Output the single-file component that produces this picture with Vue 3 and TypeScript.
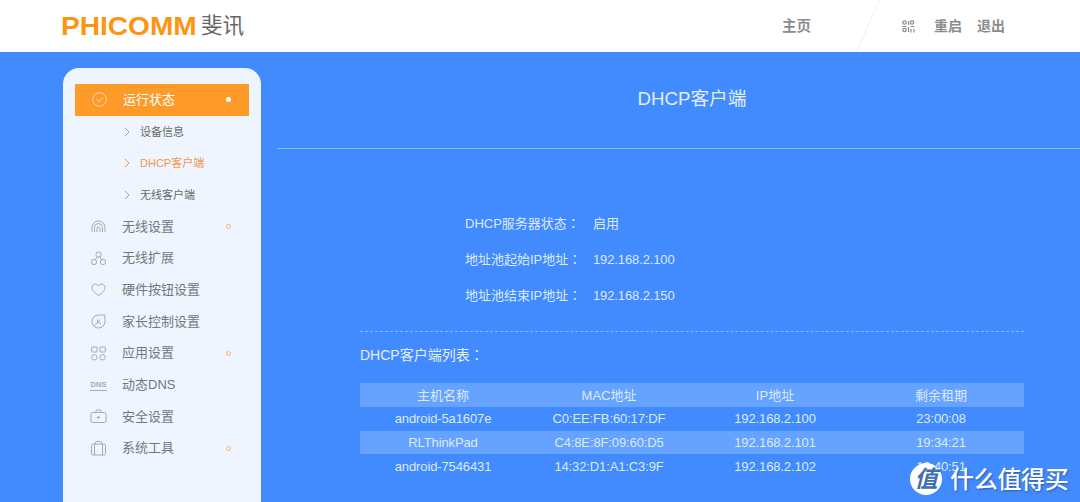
<script setup lang="ts">
interface MenuItem {
  label: string;
  icon?: string[];
  dns?: boolean;
  dot?: boolean;
}

const circle = (cx: number, cy: number, r: number) =>
  `M${cx - r} ${cy}a${r} ${r} 0 1 0 ${r * 2} 0a${r} ${r} 0 1 0 ${-r * 2} 0`;

const subItems = [
  { label: "设备信息", active: false },
  { label: "DHCP客户端", active: true },
  { label: "无线客户端", active: false },
];

const menu: MenuItem[] = [
  {
    label: "无线设置",
    dot: true,
    icon: [
      "M2 14V9.500a6.500 6.500 0 0 1 13 0V14",
      "M4.500 14V9.500a4 4 0 0 1 8 0V14",
      "M7 14v-3.500a1.500 1.500 0 0 1 3 0V14",
    ],
  },
  {
    label: "无线扩展",
    icon: [circle(8.5, 4.5, 2.6), circle(4, 12, 2.6), circle(13, 12, 2.6), "M7 7l-1.500 2.600M10 7l1.500 2.600"],
  },
  {
    label: "硬件按钮设置",
    icon: ["M8.500 14.500C5 12 2 9.600 2 6.400 2 4.200 3.700 3 5.200 3c1.400 0 2.500.7 3.300 2 .8-1.300 1.900-2 3.300-2C13.300 3 15 4.200 15 6.400c0 3.200-3 5.600-6.500 8.100z"],
  },
  {
    label: "家长控制设置",
    icon: [
      "M15 2C13 2.200 11.500 2 8.500 2A6.500 6.500 0 1 0 15 8.500C15 6 14.800 4 15 2z",
      "M4.500 12.500L10.500 6.500",
      "M7.500 6.500v3.500H11",
    ],
  },
  {
    label: "应用设置",
    dot: true,
    icon: [
      "M2.500 2h3.700a.8.8 0 0 1 .8.8v3.400a.8.8 0 0 1-.8.8H2.500a.8.8 0 0 1-.8-.8V2.800a.8.8 0 0 1 .8-.8z",
      "M10.800 2h3.700a.8.8 0 0 1 .8.8v3.400a.8.8 0 0 1-.8.8h-3.700a.8.8 0 0 1-.8-.8V2.800a.8.8 0 0 1 .8-.8z",
      circle(4.4, 12.300, 2.700),
      circle(12.600, 12.300, 2.700),
    ],
  },
  { label: "动态DNS", dns: true },
  {
    label: "安全设置",
    icon: [
      "M2.500 4.500h12a1.500 1.500 0 0 1 1.500 1.500v7a1.500 1.500 0 0 1-1.500 1.500h-12A1.500 1.500 0 0 1 1 13V6a1.500 1.500 0 0 1 1.500-1.500z",
      "M6 4.500V3a1 1 0 0 1 1-1h3a1 1 0 0 1 1 1v1.500",
      "M8.500 8v3M7 9.500h3",
    ],
  },
  {
    label: "系统工具",
    dot: true,
    icon: [
      "M3 4h11a1.500 1.500 0 0 1 1.500 1.500v8a1.500 1.500 0 0 1-1.500 1.500H3a1.500 1.500 0 0 1-1.500-1.500v-8A1.500 1.500 0 0 1 3 4z",
      "M5.500 4V2.500a1 1 0 0 1 1-1h4a1 1 0 0 1 1 1V4",
      "M4.500 4v11M12.500 4v11",
    ],
  },
];

const status = [
  { label: "DHCP服务器状态", value: "启用" },
  { label: "地址池起始IP地址", value: "192.168.2.100" },
  { label: "地址池结束IP地址", value: "192.168.2.150" },
];

const clients = [
  { name: "android-5a1607e", mac: "C0:EE:FB:60:17:DF", ip: "192.168.2.100", lease: "23:00:08" },
  { name: "RLThinkPad", mac: "C4:8E:8F:09:60:D5", ip: "192.168.2.101", lease: "19:34:21" },
  { name: "android-7546431", mac: "14:32:D1:A1:C3:9F", ip: "192.168.2.102", lease: "19:40:51" },
];
</script>

<template>
  <div class="page">
    <header class="top">
      <div class="logo">
        <span class="brand">PHICOMM</span>
        <span class="brand-cn">斐讯</span>
      </div>
      <nav class="nav">
        <span class="home">主页</span>
        <svg class="slash" width="24" height="52" viewBox="0 0 24 52">
          <path d="M23.500 0L0.500 52" stroke="#f0f0f0" fill="none" />
        </svg>
        <svg class="qr" width="13" height="13" viewBox="0 0 13 13" fill="none" stroke="#8c8c8c" stroke-width="1.200">
          <path :d="circle(2.500, 2.500, 1.700)" />
          <path :d="circle(10, 2.500, 1.700)" />
          <path :d="circle(2.500, 10, 1.700)" />
          <path d="M0.500 6.500h4M6.500 1v4M6.500 7v5M8.500 6.500h4M9 9v3.500M12 9v3.500" />
        </svg>
        <span class="action">重启</span>
        <span class="action">退出</span>
      </nav>
    </header>

    <div class="body">
      <aside class="side">
        <div class="active-item">
          <svg class="item-icon" width="17" height="17" viewBox="0 0 17 17" fill="none" stroke="#fbdcb0" stroke-width="1">
            <path :d="circle(8.500, 8.500, 6.800)" />
            <path d="M5.500 8.500l2.300 2.300 3.900-4" />
          </svg>
          <span class="item-label">运行状态</span>
          <i class="active-dot"></i>
        </div>
        <div v-for="sub in subItems" :key="sub.label" class="sub-item" :class="{ on: sub.active }">
          <svg width="6" height="10" viewBox="0 0 6 10" fill="none" stroke="currentColor" stroke-width="1">
            <path d="M1 1l4 4-4 4" />
          </svg>
          <span class="sub-label">{{ sub.label }}</span>
        </div>
        <div v-for="item in menu" :key="item.label" class="menu-item">
          <span v-if="item.dns" class="dns item-icon">DNS</span>
          <svg v-else class="item-icon" width="17" height="17" viewBox="0 0 17 17" fill="none" stroke="#a6a9b0" stroke-width="1">
            <path v-for="d in item.icon" :key="d" :d="d" />
          </svg>
          <span class="item-label">{{ item.label }}</span>
          <i v-if="item.dot" class="ring"></i>
        </div>
      </aside>

      <main class="main">
        <h1 class="title">DHCP客户端</h1>
        <div class="content">
          <div class="status">
            <div v-for="row in status" :key="row.label" class="status-row">
              <span class="status-label">{{ row.label }}<span class="colon">：</span></span>
              <span class="status-value">{{ row.value }}</span>
            </div>
          </div>
          <div class="list-title">DHCP客户端列表<span class="colon">：</span></div>
          <table class="clients">
            <thead>
              <tr>
                <th>主机名称</th>
                <th>MAC地址</th>
                <th>IP地址</th>
                <th>剩余租期</th>
              </tr>
            </thead>
            <tbody>
              <tr v-for="c in clients" :key="c.mac">
                <td>{{ c.name }}</td>
                <td>{{ c.mac }}</td>
                <td>{{ c.ip }}</td>
                <td>{{ c.lease }}</td>
              </tr>
            </tbody>
          </table>
        </div>
      </main>

      <div class="watermark">
        <span class="wm-badge">值</span>
        <span class="wm-text">什么值得买</span>
      </div>
    </div>
  </div>
</template>

<style>
html,
body {
  margin: 0;
  overflow: hidden;
}
</style>

<style scoped>
.page {
  width: 1080px;
  height: 502px;
  overflow: hidden;
  font-family: "Liberation Sans", "Noto Sans CJK SC", sans-serif;
}

.top {
  height: 52px;
  background: #fff;
  display: flex;
  align-items: center;
  justify-content: space-between;
}

.logo {
  margin-left: 61px;
  display: flex;
  align-items: center;
}

.brand {
  font-size: 26.500px;
  font-weight: 700;
  color: #fb9513;
  line-height: 30px;
  transform: scaleX(1.060);
  transform-origin: left center;
}

.brand-cn {
  margin-left: 12px;
  font-size: 21.500px;
  color: #666;
  line-height: 30px;
}

.nav {
  display: flex;
  align-items: center;
  height: 52px;
  margin-right: 75px;
  font-size: 14px;
  font-weight: 700;
  color: #8c8c8c;
}

.home,
.action {
  padding-bottom: 3px;
}

.home {
  font-size: 14.500px;
}

.slash {
  margin-left: 45px;
  flex: none;
}

.qr {
  margin-left: 22px;
}

.action {
  margin-left: 15px;
}

.qr + .action {
  margin-left: 19px;
}

.body {
  position: relative;
  height: 450px;
  background: #428bff;
  display: flex;
  overflow: hidden;
}

.side {
  width: 174px;
  height: 480px;
  margin: 16px 0 0 63px;
  padding: 16px 12px 0;
  background: #eef5ff;
  border-radius: 16px 16px 0 0;
  flex: none;
}

.active-item,
.sub-item,
.menu-item {
  height: 31.700px;
  display: flex;
  align-items: center;
}

.active-item {
  background: #fe9a28;
  color: #fff;
  font-size: 13px;
  padding-left: 16px;
  padding-right: 18px;
}

.item-icon {
  width: 17px;
  flex: none;
}

.item-label {
  margin-left: 15px;
  padding-bottom: 2px;
  flex: 1;
}

.menu-item .item-label {
  padding-bottom: 3px;
}

.active-dot {
  width: 5px;
  height: 5px;
  border-radius: 50%;
  background: #fff;
}

.sub-item {
  padding-left: 49px;
  font-size: 11px;
  color: #6a6a6a;
}

.sub-item svg {
  color: #a0a4ab;
  margin-right: 10px;
}

.sub-label {
  padding-bottom: 2px;
}

.sub-item.on,
.sub-item.on svg {
  color: #f0974a;
}

.menu-item {
  padding-left: 15px;
  padding-right: 18px;
  font-size: 13px;
  color: #777;
}

.dns {
  font-size: 7.500px;
  font-weight: 700;
  line-height: 9px;
  color: #a6a9b0;
  text-align: center;
  border-bottom: 1px solid #a6a9b0;
  padding-bottom: 1px;
}

.ring {
  width: 3px;
  height: 3px;
  border: 1px solid #f3b878;
  border-radius: 50%;
  background: #fdf0e0;
}

.main {
  margin-left: 16px;
  flex: 1;
  min-width: 0;
  color: #dbe9ff;
}

.title {
  margin: 0;
  height: 96px;
  width: 830px;
  line-height: 94px;
  text-align: center;
  font-size: 18.700px;
  font-weight: 400;
  color: #e3eeff;
  border-bottom: 1px solid #8db8ff;
}

.content {
  margin: 0 56px 0 83px;
}

.status {
  padding: 56px 0 19px 105px;
  border-bottom: 1px dashed #8db8ff;
}

.status-row {
  height: 35.700px;
  display: flex;
  align-items: center;
  font-size: 13px;
}

.status-label {
  width: 128px;
}

.status-value {
  letter-spacing: -0.120px;
}

.status-row + .status-row .status-value {
  padding-top: 2px;
}

.colon {
  font-family: "Noto Sans CJK TC", sans-serif;
}

.list-title {
  margin-top: 13px;
  height: 38px;
  font-size: 14px;
  line-height: 18px;
  color: #e3eeff;
}

.clients {
  width: 664px;
  border-collapse: collapse;
  table-layout: fixed;
  font-size: 13px;
}

.clients th,
.clients td {
  height: 23.800px;
  padding: 0;
  text-align: center;
  font-weight: 400;
  color: #dbe9ff;
}

.clients td {
  letter-spacing: -0.120px;
}

.clients thead tr,
.clients tbody tr:nth-child(even) {
  background: #66a3ff;
}

.watermark {
  position: absolute;
  left: 910px;
  top: 408px;
  display: flex;
  align-items: center;
}

.wm-badge {
  width: 32px;
  height: 32px;
  border-radius: 50%;
  background: #fff;
  color: #3f6fb8;
  font-size: 23px;
  font-weight: 700;
  line-height: 32px;
  text-align: center;
  font-style: italic;
}

.wm-text {
  margin-left: 8px;
  padding-bottom: 3px;
  font-size: 24px;
  font-weight: 500;
  letter-spacing: -0.300px;
  color: #fff;
  text-shadow: 1px 1px 2px rgba(30, 60, 120, 0.600);
}
</style>
